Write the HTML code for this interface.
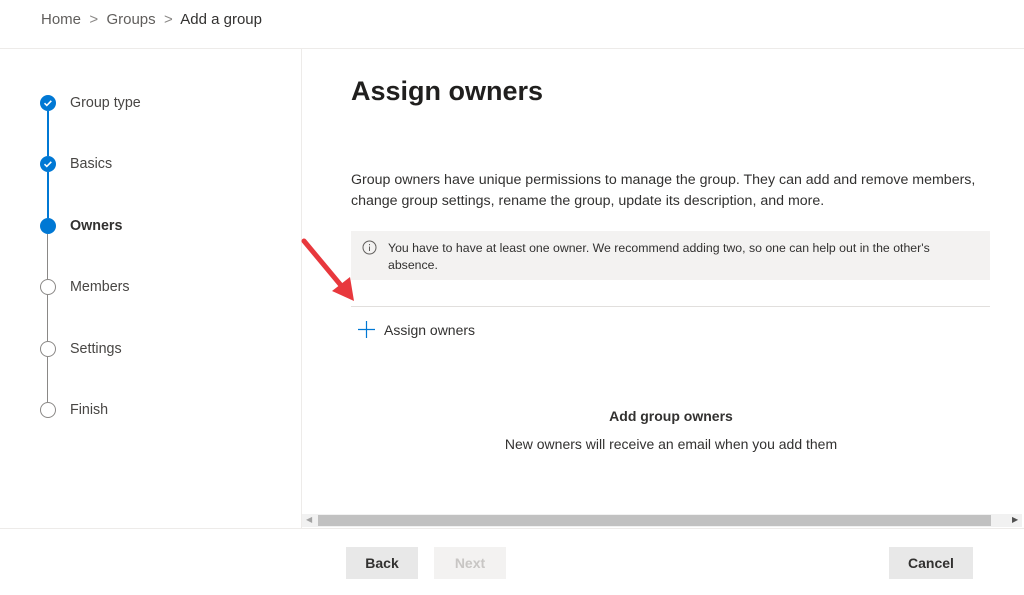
<!DOCTYPE html>
<html><head><style>
body{margin:0;width:1024px;height:595px;background:#fff;font-family:"Liberation Sans",sans-serif;position:relative;overflow:hidden;color:#323130}
.a{position:absolute}
.bc{top:11px;left:41px;font-size:15px;color:#605e5c}
.step{position:absolute;left:70px;font-size:14.3px;color:#484644}
.c{position:absolute;left:40px;width:16px;height:16px;border-radius:50%;box-sizing:border-box}
.btn{position:absolute;top:547px;height:32px;background:#e8e8e8;font-size:14px;font-weight:bold;text-align:center;line-height:33px;color:#323130}
</style></head><body>
<div class="a bc">Home &nbsp;<span style="color:#8a8886">&gt;</span>&nbsp; Groups &nbsp;<span style="color:#8a8886">&gt;</span>&nbsp; <span style="color:#323130">Add a group</span></div>
<div class="a" style="top:48px;left:0;width:1024px;height:1px;background:#edebe9"></div>
<div class="a" style="top:49px;left:301px;width:1px;height:479px;background:#edebe9"></div>
<div class="a" style="top:528px;left:0;width:1024px;height:1px;background:#edebe9"></div>
<div class="a" style="left:47px;top:111px;width:2px;height:45px;background:#0078d4"></div>
<div class="a" style="left:47px;top:172px;width:2px;height:46px;background:#0078d4"></div>
<div class="a" style="left:47px;top:234px;width:1px;height:45px;background:#8a8886"></div>
<div class="a" style="left:47px;top:295px;width:1px;height:46px;background:#8a8886"></div>
<div class="a" style="left:47px;top:357px;width:1px;height:45px;background:#8a8886"></div>
<svg class="a" style="left:40px;top:95px" width="16" height="16"><circle cx="8" cy="8" r="8" fill="#0078d4"/><path d="M4.5 8.2l2.3 2.2 4.5-4.6" stroke="#fff" stroke-width="1.6" fill="none"/></svg>
<svg class="a" style="left:40px;top:156px" width="16" height="16"><circle cx="8" cy="8" r="8" fill="#0078d4"/><path d="M4.5 8.2l2.3 2.2 4.5-4.6" stroke="#fff" stroke-width="1.6" fill="none"/></svg>
<div class="c" style="top:218px;background:#0078d4"></div>
<div class="c" style="top:279px;border:1.5px solid #8a8886"></div>
<div class="c" style="top:341px;border:1.5px solid #8a8886"></div>
<div class="c" style="top:402px;border:1.5px solid #8a8886"></div>
<div class="step" style="top:95px">Group type</div>
<div class="step" style="top:156px">Basics</div>
<div class="step" style="top:218px;font-weight:bold;color:#323130">Owners</div>
<div class="step" style="top:279px">Members</div>
<div class="step" style="top:341px">Settings</div>
<div class="step" style="top:402px">Finish</div>
<div class="a" style="left:351px;top:76px;font-size:27px;font-weight:bold;color:#201f1e">Assign owners</div>
<div class="a" style="left:351px;top:170px;width:645px;font-size:14.2px;line-height:21px">Group owners have unique permissions to manage the group. They can add and remove members, change group settings, rename the group, update its description, and more.</div>
<div class="a" style="left:351px;top:231px;width:639px;height:49px;background:#f3f2f1"></div>
<svg class="a" style="left:362px;top:240px" width="15" height="15"><circle cx="7.5" cy="7.5" r="6.5" stroke="#605e5c" fill="none"/><path d="M7.5 6.5v4.5M7.5 4v1.2" stroke="#605e5c"/></svg>
<div class="a" style="left:388px;top:240px;width:580px;font-size:12.3px;line-height:17px;color:#323130">You have to have at least one owner. We recommend adding two, so one can help out in the other's absence.</div>
<div class="a" style="left:351px;top:306px;width:639px;height:1px;background:#e1dfdd"></div>
<svg class="a" style="left:358px;top:321px" width="17" height="17"><path d="M8.5 0v17M0 8.5h17" stroke="#0078d4" stroke-width="1.2"/></svg>
<div class="a" style="left:384px;top:322px;font-size:14px;color:#323130">Assign owners</div>
<div class="a" style="left:351px;top:408px;width:640px;text-align:center;font-size:14px;font-weight:bold">Add group owners</div>
<div class="a" style="left:351px;top:436px;width:640px;text-align:center;font-size:14px">New owners will receive an email when you add them</div>
<div class="a" style="left:302px;top:514px;width:720px;height:13px;background:#f1f1f1"></div>
<div class="a" style="left:318px;top:515px;width:673px;height:11px;background:#c1c1c1"></div>
<div class="a" style="left:306px;top:515px;font-size:8px;color:#a3a3a3">◀</div>
<div class="a" style="left:1012px;top:515px;font-size:8px;color:#505050">▶</div>
<svg class="a" style="left:298px;top:235px" width="65" height="72"><path d="M6 6L46 54" stroke="#e8383d" stroke-width="5" stroke-linecap="round"/><path d="M56 66L34 56L52 42Z" fill="#e8383d"/></svg>
<div class="btn" style="left:346px;width:72px">Back</div>
<div class="btn" style="left:434px;width:72px;background:#f3f2f1;color:#c8c6c4">Next</div>
<div class="btn" style="left:889px;width:84px">Cancel</div>
</body></html>
